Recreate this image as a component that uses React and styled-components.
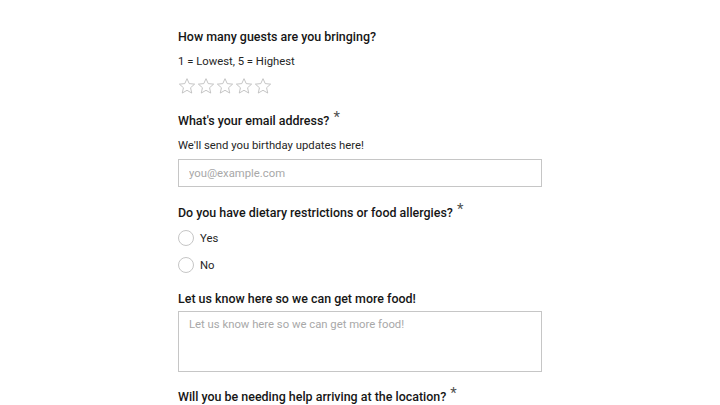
import React from "react";
import styled, { createGlobalStyle } from "styled-components";

const Global = createGlobalStyle`
  html, body { margin: 0; padding: 0; background: #ffffff; }
  body { font-family: Roboto, "Noto Sans", sans-serif; color: #161616; }
  * { box-sizing: border-box; }
`;

const Page = styled.div`
  width: 720px;
  height: 405px;
  overflow: hidden;
  display: flex;
  padding-left: 178px;
  padding-top: 28px;
`;

const Form = styled.form`
  width: 364px;
  display: flex;
  flex-direction: column;
`;

const Field = styled.div`
  display: flex;
  flex-direction: column;
  margin-bottom: ${(p) => p.$mb ?? 16}px;
`;

const Title = styled.div`
  font-size: 12.45px;
  font-weight: 500;
  line-height: 18px;
  color: #161616;
  display: flex;
  align-items: flex-start;
  white-space: nowrap;
`;

const Required = styled.span`
  font-size: 15px;
  line-height: 12px;
  margin-left: 4px;
  margin-top: -1px;
  color: #525252;
  font-weight: 400;
`;

const Help = styled.div`
  font-size: 11.3px;
  line-height: 16px;
  color: #262626;
  margin-top: 8px;
`;

const Stars = styled.div`
  display: flex;
  gap: 1px;
  margin-top: 7px;
  height: 18px;
`;

const Input = styled.input`
  margin-top: 5px;
  height: 28px;
  width: 364px;
  border: 1px solid #c6c6c6;
  padding: 0 10px;
  font-family: inherit;
  font-size: 11.3px;
  color: #161616;
  outline: none;
  &::placeholder { color: #a8a8a8; }
`;

const TextArea = styled.textarea`
  margin-top: 3px;
  height: 61px;
  width: 364px;
  border: 1px solid #c6c6c6;
  padding: 6px 10px;
  font-family: inherit;
  font-size: 11.3px;
  line-height: 14px;
  resize: none;
  outline: none;
  display: block;
  &::placeholder { color: #a8a8a8; }
`;

const Options = styled.div`
  display: flex;
  flex-direction: column;
  gap: 9px;
  margin-top: 7px;
`;

const Option = styled.label`
  display: flex;
  align-items: center;
  gap: 6px;
  height: 18px;
  font-size: 11.3px;
  color: #262626;
`;

const Radio = styled.span`
  width: 16px;
  height: 16px;
  border-radius: 50%;
  border: 1px solid #c6c6c6;
  background: #fff;
`;

const StarIcon = () => (
  <svg width="18" height="18" viewBox="0 0 24 24" fill="none" stroke="#b8b8b8" strokeWidth="1.1" strokeLinejoin="round">
    <path d="M12 2.2l2.95 6.6 7.2.7-5.4 4.8 1.55 7.1L12 17.7l-6.3 3.7 1.55-7.1-5.4-4.8 7.2-.7z" />
  </svg>
);

export default function App() {
  return (
    <>
      <Global />
      <Page>
        <Form>
          <Field $mb={17}>
            <Title>How many guests are you bringing?</Title>
            <Help>1 = Lowest, 5 = Highest</Help>
            <Stars>
              {[0, 1, 2, 3, 4].map((i) => (
                <StarIcon key={i} />
              ))}
            </Stars>
          </Field>
          <Field $mb={17}>
            <Title>
              What's your email address?<Required>*</Required>
            </Title>
            <Help>We'll send you birthday updates here!</Help>
            <Input placeholder="you@example.com" />
          </Field>
          <Field $mb={16}>
            <Title>
              Do you have dietary restrictions or food allergies?<Required>*</Required>
            </Title>
            <Options>
              <Option>
                <Radio />
                Yes
              </Option>
              <Option>
                <Radio />
                No
              </Option>
            </Options>
          </Field>
          <Field $mb={16}>
            <Title>Let us know here so we can get more food!</Title>
            <TextArea placeholder="Let us know here so we can get more food!" />
          </Field>
          <Field>
            <Title>
              Will you be needing help arriving at the location?<Required>*</Required>
            </Title>
          </Field>
        </Form>
      </Page>
    </>
  );
}
